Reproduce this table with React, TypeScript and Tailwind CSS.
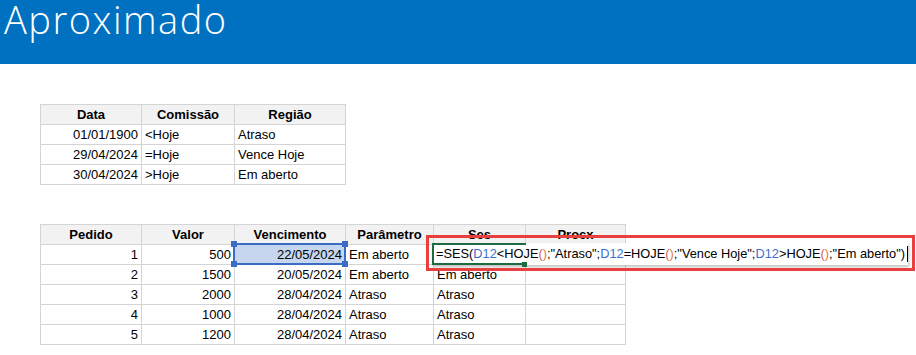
import React from 'react';

const font = { fontFamily: '"Liberation Sans", Arial, sans-serif' };

type Cell = { text: string; align?: 'left' | 'right' | 'center' };

function Grid({ cols, header, rows }: { cols: string; header: string[]; rows: Cell[][] }) {
  return (
    <div className={`grid ${cols} gap-px bg-[#d4d4d4] p-px w-fit text-[13px] text-black`}>
      {header.map((h) => (
        <div key={h} className="h-[19px] bg-[#f2f2f2] font-bold flex items-center justify-center leading-none">
          {h}
        </div>
      ))}
      {rows.map((row, i) =>
        row.map((c, j) => (
          <div
            key={`${i}-${j}`}
            className={`h-[19px] bg-white flex items-center px-[3px] leading-none whitespace-nowrap ${
              c.align === 'right' ? 'justify-end' : 'justify-start'
            }`}
          >
            {c.text}
          </div>
        ))
      )}
    </div>
  );
}

const Blue = ({ children }: { children: React.ReactNode }) => <span className="text-[#3b6fd0]">{children}</span>;
const Parens = () => (
  <>
    <span className="text-[#e0565b]">(</span>
    <span className="text-[#d9822b]">)</span>
  </>
);

export default function App() {
  const regras: Cell[][] = [
    [{ text: '01/01/1900', align: 'right' }, { text: '<Hoje' }, { text: 'Atraso' }],
    [{ text: '29/04/2024', align: 'right' }, { text: '=Hoje' }, { text: 'Vence Hoje' }],
    [{ text: '30/04/2024', align: 'right' }, { text: '>Hoje' }, { text: 'Em aberto' }],
  ];

  const pedidos: Cell[][] = [
    ['1', '500', '22/05/2024', 'Em aberto', '', ''],
    ['2', '1500', '20/05/2024', 'Em aberto', 'Em aberto', ''],
    ['3', '2000', '28/04/2024', 'Atraso', 'Atraso', ''],
    ['4', '1000', '28/04/2024', 'Atraso', 'Atraso', ''],
    ['5', '1200', '28/04/2024', 'Atraso', 'Atraso', ''],
  ].map((r) => r.map((t, i) => ({ text: t, align: i < 3 ? 'right' : 'left' } as Cell)));

  return (
    <div className="w-[916px] h-[355px] bg-white overflow-hidden" style={font}>
      <div className="h-[64px] bg-[#0070c0] px-[4px] flex items-start">
        <h1
          className="text-white text-[38px] font-light tracking-[1.5px] leading-[48px] -mt-[5px]"
          style={{ fontFamily: '"Open Sans", sans-serif' }}
        >
          Aproximado
        </h1>
      </div>

      <div className="pl-[40px] pt-[40px]">
        <Grid cols="grid-cols-[100px_92px_110px]" header={['Data', 'Comissão', 'Região']} rows={regras} />

        <div className="relative mt-[39px]">
          <Grid
            cols="grid-cols-[100px_92px_110px_87px_91px_99px]"
            header={['Pedido', 'Valor', 'Vencimento', 'Parâmetro', 'Ses', 'Procx']}
            rows={pedidos}
          />

          {/* célula selecionada D12 */}
          <div className="absolute left-[193px] top-[19px] w-[113px] h-[22px] border-2 border-[#3a6cc6] bg-[#c6d6ef] flex items-center justify-end pr-[2px] text-[13px] leading-none">
            22/05/2024
            <span className="absolute -left-[4px] -top-[4px] w-[6px] h-[6px] bg-[#3a6cc6]" />
            <span className="absolute -right-[4px] -top-[4px] w-[6px] h-[6px] bg-[#3a6cc6]" />
            <span className="absolute -left-[4px] -bottom-[4px] w-[6px] h-[6px] bg-[#3a6cc6]" />
            <span className="absolute -right-[4px] -bottom-[4px] w-[6px] h-[6px] bg-[#3a6cc6]" />
          </div>

          {/* edição da fórmula */}
          <div className="absolute left-[392px] top-[19px] w-[476px] h-[22px] bg-white shadow-[1px_2px_3px_rgba(0,0,0,0.25)] flex items-center pl-[4px] text-[12.8px] leading-none whitespace-nowrap">
            <span className="absolute left-0 top-0 w-[94px] h-[2px] bg-[#1e6b41]" />
            <span className="absolute left-0 bottom-0 w-[92px] h-[2px] bg-[#1e6b41]" />
            <span className="absolute left-0 top-0 w-[2px] h-full bg-[#1e6b41]" />
            <span className="absolute left-[90px] -bottom-[2px] w-[5px] h-[5px] bg-[#1e6b41]" />
            <span>
              =SES(<Blue>D12</Blue>&lt;HOJE<Parens />;"Atraso";<Blue>D12</Blue>=HOJE<Parens />;"Vence Hoje";<Blue>D12</Blue>&gt;HOJE
              <Parens />;"Em aberto")
            </span>
            <span className="ml-[2px] w-px h-[16px] bg-black" />
          </div>

          {/* destaque vermelho */}
          <div className="absolute left-[386px] top-[11px] w-[489px] h-[36px] border-[3px] border-[#e8403f]" />
        </div>
      </div>
    </div>
  );
}
